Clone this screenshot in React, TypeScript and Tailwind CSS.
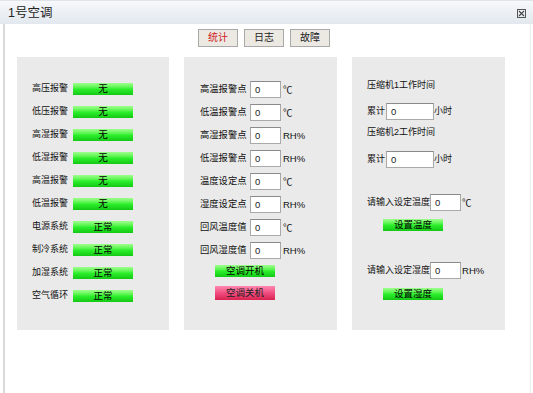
const font = "font-['Liberation_Sans','Noto_Sans_CJK_SC',sans-serif]";

const alarms = [
  ["高压报警", "无"],
  ["低压报警", "无"],
  ["高湿报警", "无"],
  ["低湿报警", "无"],
  ["高温报警", "无"],
  ["低温报警", "无"],
  ["电源系统", "正常"],
  ["制冷系统", "正常"],
  ["加湿系统", "正常"],
  ["空气循环", "正常"],
];

const setpoints = [
  ["高温报警点", "℃"],
  ["低温报警点", "℃"],
  ["高湿报警点", "RH%"],
  ["低湿报警点", "RH%"],
  ["温度设定点", "℃"],
  ["湿度设定点", "RH%"],
  ["回风温度值", "℃"],
  ["回风湿度值", "RH%"],
];

function GreenBar({ text, className = "" }: { text: string; className?: string }) {
  return (
    <div
      className={`w-[60px] h-[12px] flex items-center justify-center text-[9.5px] leading-none text-black bg-gradient-to-b from-[#9dff8c] via-[#2cf02c] to-[#14c814] ${className}`}
    >
      {text}
    </div>
  );
}

function Field({ w }: { w: string }) {
  return (
    <div
      className={`${w} h-[17px] bg-white border border-[#a9a9a9] border-t-[#8a8a8a] flex items-center pl-[4px] text-[9.5px] leading-none text-[#222]`}
    >
      0
    </div>
  );
}

export default function App() {
  return (
    <div className={`w-[533px] h-[393px] bg-white flex flex-col overflow-hidden text-[#111] ${font}`}>
      <div className="h-[3px] bg-[#f6f8fa] border-t border-[#dfe4ea]" />
      <div className="h-[21px] flex items-center justify-between pl-[8px] pr-[7px] bg-gradient-to-b from-[#f5f7fa] to-[#e2e8ee]">
        <span className="text-[12.5px] leading-none text-[#222]">1号空调</span>
        <div className="w-[9px] h-[9px] border border-[#555] flex items-center justify-center">
          <svg width="7" height="7" viewBox="0 0 7 7">
            <path d="M1 1L6 6M6 1L1 6" stroke="#444" strokeWidth="1.1" />
          </svg>
        </div>
      </div>

      <div className="flex-1 ml-[3px] mr-[2px] border-l-2 border-r border-l-[#d9d9d9] border-r-[#eeeeee] flex flex-col">
        <div className="flex gap-[6px] pl-[193px] mt-[5px]">
          {["统计", "日志", "故障"].map((t, i) => (
            <div
              key={t}
              className={`w-[40px] h-[18px] flex items-center justify-center text-[10px] leading-none border border-[#a8a8a8] bg-[#ebe9e2] ${i === 0 ? "text-[#d02020]" : "text-[#222]"}`}
            >
              {t}
            </div>
          ))}
        </div>

        <div className="flex gap-[15px] pl-[12px] mt-[10px]">
          {/* alarms */}
          <div className="w-[152px] h-[273px] bg-[#eaeaea] pt-[20px] pl-[15px]">
            {alarms.map(([l, v]) => (
              <div key={l} className="h-[23px] flex items-center">
                <span className="w-[41px] text-[9px] leading-none">{l}</span>
                <GreenBar text={v} />
              </div>
            ))}
          </div>

          {/* setpoints */}
          <div className="w-[153px] h-[273px] bg-[#eaeaea] pt-[21px] pl-[16px]">
            {setpoints.map(([l, u]) => (
              <div key={l} className="h-[23px] flex items-center">
                <span className="w-[50px] text-[9.3px] leading-none">{l}</span>
                <Field w="w-[31px]" />
                <span className="ml-[2px] text-[9.5px] leading-none">{u}</span>
              </div>
            ))}
            <GreenBar text="空调开机" className="ml-[15px] mt-[3px]" />
            <div className="ml-[15px] mt-[9px] w-[60px] h-[14px] flex items-center justify-center text-[9.5px] leading-none text-[#222] bg-gradient-to-b from-[#ff86b0] via-[#f04b80] to-[#d9204f]">
              空调关机
            </div>
          </div>

          {/* runtime & set */}
          <div className="w-[153px] h-[273px] bg-[#eaeaea] pt-[21px] pl-[15px] text-[9px] leading-none">
            <div className="h-[14px] flex items-center">压缩机1工作时间</div>
            <div className="mt-[11px] flex items-center">
              <span>累计</span>
              <Field w="w-[48px] ml-[1px]" />
              <span>小时</span>
            </div>
            <div className="mt-[5px] h-[14px] flex items-center">压缩机2工作时间</div>
            <div className="mt-[12px] flex items-center">
              <span>累计</span>
              <Field w="w-[48px] ml-[1px]" />
              <span>小时</span>
            </div>
            <div className="mt-[26px] flex items-center">
              <span>请输入设定温度</span>
              <Field w="w-[31px]" />
              <span className="ml-[1px] text-[9.5px]">℃</span>
            </div>
            <GreenBar text="设置温度" className="ml-[16px] mt-[8px]" />
            <div className="mt-[31px] flex items-center">
              <span>请输入设定湿度</span>
              <Field w="w-[31px]" />
              <span className="ml-[1px] text-[9.5px]">RH%</span>
            </div>
            <GreenBar text="设置湿度" className="ml-[16px] mt-[9px]" />
          </div>
        </div>
      </div>
    </div>
  );
}
